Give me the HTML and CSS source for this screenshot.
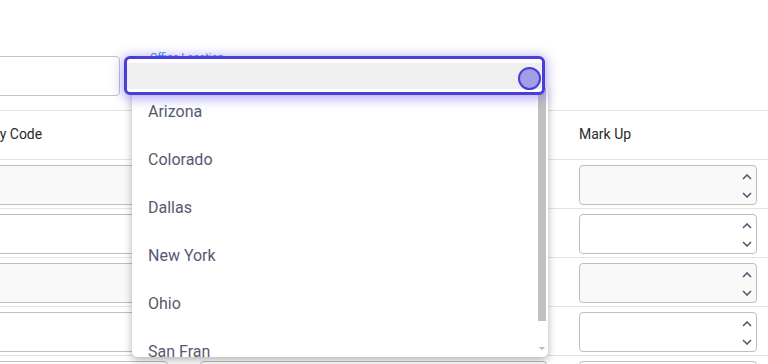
FILE: index.html
```html
<!DOCTYPE html>
<html>
<head>
<meta charset="utf-8">
<link rel="stylesheet" href="styles.css">
</head>
<body>
<div class="page">
  <div class="filters">
    <div class="filter-input"></div>
    <div class="select-field">
      <span class="field-label">Office Location</span>
      <div class="dropdown">
        <ul class="options">
          <li>Arizona</li>
          <li>Colorado</li>
          <li>Dallas</li>
          <li>New York</li>
          <li>Ohio</li>
          <li>San Fran</li>
        </ul>
        <div class="scroll-thumb"></div>
        <div class="scroll-arrow"></div>
      </div>
      <div class="select-box">
        <div class="band"></div>
        <span class="knob"></span>
      </div>
    </div>
  </div>

  <div class="table">
    <div class="row head">
      <div class="cell a">Currency Code</div>
      <div class="cell b">Office Location</div>
      <div class="cell c">Mark Up</div>
    </div>
    <div class="row shade">
      <div class="cell a"><div class="box"></div></div>
      <div class="cell b"><div class="box"></div></div>
      <div class="cell c"><div class="box num"><span class="spin"><svg width="10" height="6" viewBox="0 0 10 6"><path d="M1 5 L5 1 L9 5" fill="none" stroke="#565872" stroke-width="1.6"/></svg><svg width="10" height="6" viewBox="0 0 10 6"><path d="M1 1 L5 5 L9 1" fill="none" stroke="#565872" stroke-width="1.6"/></svg></span></div></div>
    </div>
    <div class="row">
      <div class="cell a"><div class="box"></div></div>
      <div class="cell b"><div class="box"></div></div>
      <div class="cell c"><div class="box num"><span class="spin"><svg width="10" height="6" viewBox="0 0 10 6"><path d="M1 5 L5 1 L9 5" fill="none" stroke="#565872" stroke-width="1.6"/></svg><svg width="10" height="6" viewBox="0 0 10 6"><path d="M1 1 L5 5 L9 1" fill="none" stroke="#565872" stroke-width="1.6"/></svg></span></div></div>
    </div>
    <div class="row shade">
      <div class="cell a"><div class="box"></div></div>
      <div class="cell b"><div class="box"></div></div>
      <div class="cell c"><div class="box num"><span class="spin"><svg width="10" height="6" viewBox="0 0 10 6"><path d="M1 5 L5 1 L9 5" fill="none" stroke="#565872" stroke-width="1.6"/></svg><svg width="10" height="6" viewBox="0 0 10 6"><path d="M1 1 L5 5 L9 1" fill="none" stroke="#565872" stroke-width="1.6"/></svg></span></div></div>
    </div>
    <div class="row">
      <div class="cell a"><div class="box"></div></div>
      <div class="cell b"><div class="box"></div></div>
      <div class="cell c"><div class="box num"><span class="spin"><svg width="10" height="6" viewBox="0 0 10 6"><path d="M1 5 L5 1 L9 5" fill="none" stroke="#565872" stroke-width="1.6"/></svg><svg width="10" height="6" viewBox="0 0 10 6"><path d="M1 1 L5 5 L9 1" fill="none" stroke="#565872" stroke-width="1.6"/></svg></span></div></div>
    </div>
    <div class="row">
      <div class="cell a"><div class="box"></div></div>
      <div class="cell b"><div class="box"></div></div>
      <div class="cell c"><div class="box num"></div></div>
    </div>
  </div>
</div>
</body>
</html>
```
FILE: styles.css
```css
html, body {
  margin: 0;
  padding: 0;
  background: #fff;
  overflow: hidden;
  width: 768px;
  height: 364px;
}
body {
  font-family: Roboto, "Liberation Sans", sans-serif;
  color: #333;
}
.page {
  margin-left: -49px;
  width: 817px;
}
.filters {
  display: flex;
  align-items: flex-start;
  gap: 4px;
  padding-top: 56px;
  position: relative;
  z-index: 5;
}
.filter-input {
  width: 167px;
  height: 38px;
  border: 1px solid #c4c4c4;
  border-radius: 4px;
  background: #fff;
}
.select-field {
  position: relative;
  width: 421px;
  height: 39px;
}
.field-label {
  position: absolute;
  left: 26px;
  top: -5px;
  font-size: 11px;
  line-height: 13px;
  color: #2b8ef0;
  z-index: 1;
}
.select-box {
  position: relative;
  z-index: 3;
  box-sizing: border-box;
  height: 39px;
  border: 3px solid #4b3ed6;
  border-radius: 6px;
  background: #fff;
  padding-top: 4px;
  box-shadow: 0 2px 12px 2px rgba(92, 74, 232, 0.45);
}
.band {
  height: 26px;
  background: #efefef;
}
.knob {
  position: absolute;
  right: 1px;
  top: 8px;
  box-sizing: border-box;
  width: 23px;
  height: 23px;
  border-radius: 50%;
  background: #a39ee8;
  border: 2px solid #4b3ed6;
}
.dropdown {
  position: absolute;
  z-index: 2;
  left: 8px;
  top: 32px;
  width: 416px;
  height: 269px;
  background: #fff;
  border-radius: 0 0 5px 5px;
  box-shadow: 0 3px 9px rgba(0, 0, 0, 0.3);
  overflow: hidden;
}
.options {
  list-style: none;
  margin: 0;
  padding: 0;
}
.options li {
  height: 48px;
  line-height: 48px;
  padding-left: 16px;
  font-size: 16px;
  color: #565872;
}
.scroll-thumb {
  position: absolute;
  right: 2px;
  top: 0;
  width: 8px;
  height: 233px;
  background: #c1c1c1;
}
.scroll-arrow {
  position: absolute;
  right: 3px;
  bottom: 7px;
  width: 0;
  height: 0;
  border-left: 3px solid transparent;
  border-right: 3px solid transparent;
  border-top: 3px solid #b8b8b8;
}
.table {
  margin-top: 14px;
  border-top: 1px solid #e3e3e3;
}
.row {
  display: flex;
  gap: 32px;
  height: 48px;
  border-bottom: 1px solid #e3e3e3;
  padding-right: 11px;
}
.row.head {
  align-items: center;
  font-size: 14px;
  color: #2a2a2a;
}
.row.head .cell {
  padding-bottom: 3px;
}
.cell {
  box-sizing: border-box;
}
.cell.a { width: 217px; }
.cell.b { width: 347px; }
.cell.c { width: 178px; }
.row:not(.head) .cell {
  padding-top: 5px;
}
.box {
  box-sizing: border-box;
  height: 40px;
  border: 1px solid #bdbdbd;
  border-radius: 4px;
  background: #fff;
  position: relative;
}
.row.shade .box {
  background: #f9f9f9;
}
.spin {
  position: absolute;
  right: 4px;
  top: 8px;
  display: flex;
  flex-direction: column;
  gap: 12px;
}
.spin svg {
  display: block;
}
```
